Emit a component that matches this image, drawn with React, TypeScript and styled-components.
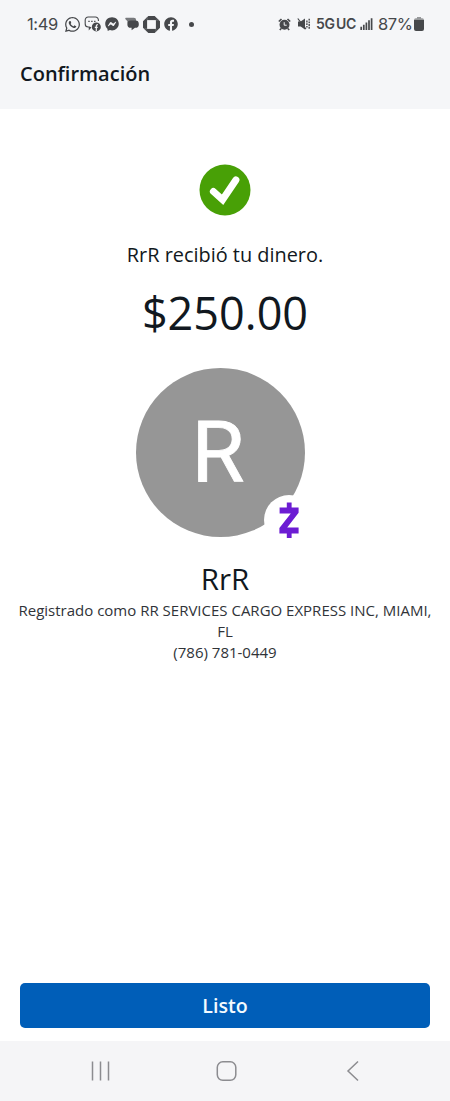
import React from "react";
import styled, { createGlobalStyle } from "styled-components";
import { FaFacebook, FaFacebookMessenger, FaWhatsapp } from "react-icons/fa";

const GlobalStyle = createGlobalStyle`
  * {
    box-sizing: border-box;
  }

  body {
    margin: 0;
    background: #fff;
    font-family: "Open Sans", "Noto Sans", sans-serif;
    color: #111820;
  }
`;

const Screen = styled.div`
  display: flex;
  flex-direction: column;
  width: 450px;
  height: 1101px;
  overflow: hidden;
  background: #fff;
`;

const StatusBar = styled.div`
  display: flex;
  justify-content: space-between;
  height: 48px;
  padding: 0 26px 0 27px;
  background: #f5f6f8;
  color: #46484b;
  font-family: Inter, Roboto, sans-serif;
`;

const StatusGroup = styled.div`
  display: flex;
  align-items: center;
  height: 48px;

  svg {
    display: block;
    flex: none;
  }
`;

const StatusText = styled.span<{ $size: number; $weight?: number; $width: number }>`
  width: ${(p) => p.$width}px;
  font-size: ${(p) => p.$size}px;
  font-weight: ${(p) => p.$weight || 400};
  line-height: 20px;
  letter-spacing: -0.4px;
  word-spacing: -1.5px;
  white-space: nowrap;
`;

const Gap = styled.span<{ $width: number }>`
  flex: none;
  width: ${(p) => p.$width}px;
`;

const Dot = styled.span`
  width: 5px;
  height: 5px;
  border-radius: 50%;
  background: #46484b;
`;

const Header = styled.header`
  height: 61px;
  padding: 12px 20px 0;
  background: #f5f6f8;
`;

const Title = styled.h1`
  margin: 0;
  font-size: 20px;
  font-weight: 600;
  line-height: 28px;
`;

const Content = styled.main`
  display: flex;
  flex: 1;
  flex-direction: column;
  align-items: center;
  padding-top: 55px;
  text-align: center;
`;

const Message = styled.p`
  margin: 25px 0 0;
  font-size: 19.9px;
  line-height: 28px;
`;

const Amount = styled.p`
  margin: 13px 0 0;
  font-size: 45px;
  line-height: 62px;
`;

const Avatar = styled.div`
  position: relative;
  display: flex;
  align-items: center;
  justify-content: center;
  width: 169px;
  height: 169px;
  margin: 23.5px 9px 0 0;
  padding: 2px 5px 0 0;
  border-radius: 50%;
  background: #969696;
  color: #fff;
  font-family: Roboto, sans-serif;
  font-size: 86px;
  line-height: 1;
  -webkit-text-stroke: 0.8px #fff;
`;

const ZelleBadge = styled.div`
  position: absolute;
  right: -9px;
  bottom: -8px;
  width: 50px;
  height: 50px;
  border-radius: 50%;
  background: #fff;

  svg {
    display: block;
  }
`;

const Name = styled.h2`
  margin: 22.5px 0 0;
  font-size: 29.5px;
  font-weight: 400;
  line-height: 40px;
`;

const Details = styled.p`
  width: 424px;
  margin: 0;
  padding-top: 1px;
  color: #303338;
  font-size: 15px;
  line-height: 20.5px;
`;

const Footer = styled.footer`
  padding: 0 20px 13.5px;
`;

const DoneButton = styled.button`
  display: block;
  width: 100%;
  height: 45px;
  padding: 0;
  border: 0;
  border-radius: 5px;
  background: #005eb8;
  color: #f4fbff;
  font-family: inherit;
  font-size: 19.6px;
  font-weight: 600;
`;

const NavBar = styled.nav`
  display: flex;
  align-items: center;
  justify-content: space-between;
  height: 60px;
  padding: 0 90px;
  background: #f5f5f7;

  svg {
    display: block;
    fill: none;
    stroke: #8c8c90;
    stroke-width: 1.5;
  }
`;

const ChatIcon = () => (
  <svg width="17" height="16" viewBox="0 0 17 16" fill="none">
    <path
      d="M7 11.2 5.3 13V11H4.2A3 3 0 0 1 1.2 8V4a3 3 0 0 1 3-3h7.2a3 3 0 0 1 3 3v1"
      stroke="currentColor"
      strokeWidth="1.1"
    />
    <path d="M4.3 5.4h1.4M7.2 5.4h1.4M10.1 5.4h1.4" stroke="currentColor" strokeWidth="1.3" />
    <circle cx="12.3" cy="10.9" r="4.5" fill="currentColor" />
    <path d="M12.3 15v-5q0-1.4 1.6-1.3M10.8 11.3h2.9" stroke="#f5f6f8" strokeWidth="1.2" />
  </svg>
);

const MessagesIcon = () => (
  <svg width="14" height="14" viewBox="0 0 14 14">
    <path d="M2.4.8h6.4q2.3 0 2.3 2.3v4.1H4.7Q2.4 7.2 2.4 5.1V4.3L.3 2Q0 .8 1 .8z" fill="#77797c" />
    <path
      d="M5.8 3.4h4.6a3.4 3.4 0 0 1 3.4 3.4v.6a3.4 3.4 0 0 1-3.4 3.4h-.4l-3.4 2.4v-2.4h-.8a3.4 3.4 0 0 1-3.4-3.4v-.6a3.4 3.4 0 0 1 3.4-3.4z"
      fill="currentColor"
    />
  </svg>
);

const ChaseIcon = () => (
  <svg width="17" height="17" viewBox="0 0 17 17">
    <path d="M5.3 0h6.4L17 5.3v6.4L11.7 17H5.3L0 11.7V5.3z" fill="currentColor" />
    <path d="M4.1 4.1h8.8v8.8H4.1z" fill="#f5f6f8" />
    <path d="M4.1 1.2v2.9M15.8 4.1h-2.9M12.9 15.8v-2.9M1.2 12.9h2.9" stroke="#8d8f91" strokeWidth=".5" />
  </svg>
);

const AlarmIcon = () => (
  <svg width="13" height="13" viewBox="0 0 13 13" fill="none" stroke="currentColor">
    <circle cx="6.5" cy="6.8" r="5" fill="currentColor" stroke="none" />
    <path d="M.8 3.5 3.5 1M12.2 3.5 9.5 1" strokeWidth="1.7" />
    <path d="m3.2 10.4-1.4 1.7M9.8 10.4l1.4 1.7" strokeWidth="1.5" />
    <path d="M6.2 4.2v3h2.5" stroke="#f5f6f8" strokeWidth="1" />
  </svg>
);

const MuteIcon = () => (
  <svg width="14" height="14" viewBox="0 0 14 14" fill="none" stroke="currentColor">
    <path d="M1 4.6h2.7L8 1.5v11L3.7 9.4H1z" fill="currentColor" stroke="none" />
    <path d="m.8 1.5 8.2 10.7" strokeWidth="1.2" />
    <path d="M9.9 3.5v7M12.2 1.7v10.6" strokeWidth="1.4" strokeDasharray="1.9 .8" />
  </svg>
);

const SignalIcon = () => (
  <svg width="13" height="12" viewBox="0 0 13 12" fill="none" stroke="currentColor" strokeWidth="1.7">
    <path d="M1.2 8.7V12M3.8 6.7V12M6.4 4.5V12M9 2.3V12M11.6.3V12" />
  </svg>
);

const BatteryIcon = () => (
  <svg width="10" height="14" viewBox="0 0 10 14">
    <path d="M3 0h4v1.2h1.2Q10 1.2 10 3H0q0-1.8 1.8-1.8H3z" fill="#97999b" />
    <path d="M0 3h10v9q0 2-2 2H2q-2 0-2-2z" fill="currentColor" />
  </svg>
);

const SuccessIcon = () => (
  <svg width="52" height="52" viewBox="0 0 52 52">
    <circle cx="26" cy="26" r="25.5" fill="#48a006" />
    <path
      d="m14.4 27.5 9.2 8.3 13.3-19.8"
      fill="none"
      stroke="#fff"
      strokeWidth="7"
      strokeLinecap="round"
      strokeLinejoin="miter"
    />
  </svg>
);

const ZelleIcon = () => (
  <svg width="50" height="50" viewBox="0 0 50 50" fill="#6c1cd3">
    <path d="M15.6 12.4h19v5.4L23.2 32.4h11.4v6H15.4v-5.3l11.4-14.7H15.6z" />
    <path d="M22.8 7.6h4.8v5.6h-4.8zM22.8 37.4h4.8v5.7h-4.8z" />
  </svg>
);

const App = () => (
  <Screen>
    <GlobalStyle />
    <StatusBar>
      <StatusGroup>
        <StatusText $size={16.5} $width={37}>
          1:49
        </StatusText>
        <FaWhatsapp size={17} />
        <Gap $width={3} />
        <ChatIcon />
        <Gap $width={4} />
        <FaFacebookMessenger size={14} />
        <Gap $width={6} />
        <MessagesIcon />
        <Gap $width={4} />
        <ChaseIcon />
        <Gap $width={4} />
        <FaFacebook size={14} />
        <Gap $width={11} />
        <Dot />
      </StatusGroup>
      <StatusGroup>
        <AlarmIcon />
        <Gap $width={6} />
        <MuteIcon />
        <Gap $width={5} />
        <StatusText $size={14} $weight={600} $width={44}>
          5G UC
        </StatusText>
        <SignalIcon />
        <Gap $width={5} />
        <StatusText $size={16.5} $width={36}>
          87%
        </StatusText>
        <BatteryIcon />
      </StatusGroup>
    </StatusBar>
    <Header>
      <Title>Confirmación</Title>
    </Header>
    <Content>
      <SuccessIcon />
      <Message>RrR recibió tu dinero.</Message>
      <Amount>$250.00</Amount>
      <Avatar>
        R
        <ZelleBadge>
          <ZelleIcon />
        </ZelleBadge>
      </Avatar>
      <Name>RrR</Name>
      <Details>Registrado como RR SERVICES CARGO EXPRESS INC, MIAMI, FL</Details>
      <Details>(786) 781-0449</Details>
    </Content>
    <Footer>
      <DoneButton>Listo</DoneButton>
    </Footer>
    <NavBar>
      <svg width="22" height="22" viewBox="0 0 22 22">
        <path d="M2.5 1.5v19M10.5 1.5v19M18.5 1.5v19" />
      </svg>
      <svg width="26" height="22" viewBox="0 0 26 22">
        <rect x="5.3" y="1.8" width="18.5" height="18.5" rx="5.5" />
      </svg>
      <svg width="22" height="22" viewBox="0 0 22 22">
        <path d="m20 1.5-10 9.5 10 9.5" />
      </svg>
    </NavBar>
  </Screen>
);

export default App;
